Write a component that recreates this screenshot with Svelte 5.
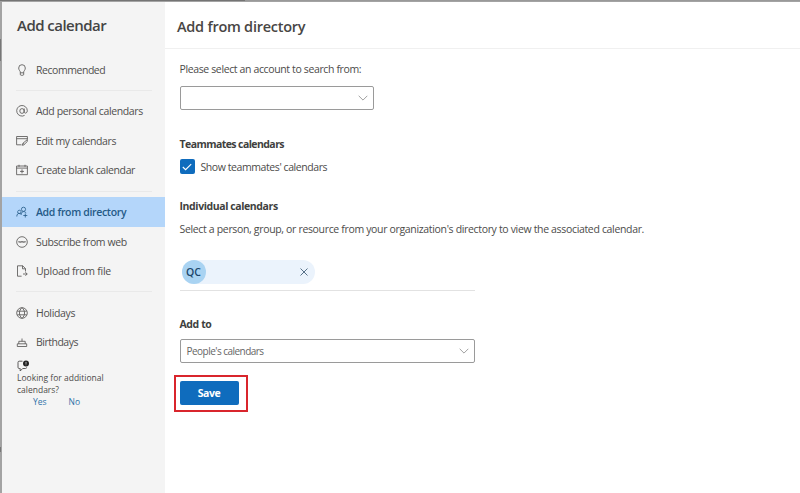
<script lang="ts">
    interface Item {
        icon: string;
        label: string;
        spacing: number;
        active?: boolean;
    }

    const groups: Item[][] = [
        [{ icon: 'bulb', label: 'Recommended', spacing: -0.45 }],
        [
            { icon: 'at', label: 'Add personal calendars', spacing: -0.38 },
            { icon: 'edit', label: 'Edit my calendars', spacing: -0.38 },
            { icon: 'create', label: 'Create blank calendar', spacing: -0.38 },
        ],
        [
            { icon: 'people', label: 'Add from directory', spacing: -0.33, active: true },
            { icon: 'web', label: 'Subscribe from web', spacing: -0.38 },
            { icon: 'file', label: 'Upload from file', spacing: -0.28 },
        ],
        [
            { icon: 'globe', label: 'Holidays', spacing: -0.35 },
            { icon: 'cake', label: 'Birthdays', spacing: -0.5 },
        ],
    ];

    // 12x12 outlines
    const icons: Record<string, string> = {
        bulb: 'M4.3 8.8V8C4.3 7 2.7 6.200 2.700 4A3.300 3.300 0 0 1 9.300 4C9.300 6.200 7.700 7 7.700 8V8.800ZM4.300 8.800V10.300Q4.300 11.300 5.300 11.300H6.700Q7.700 11.300 7.700 10.300V8.800',
        at: 'M8.200 3.500V6.800C8.200 8.900 11.300 8.500 11.300 5.700A5.300 5.300 0 1 0 8.600 10.400M8.200 6A2.200 2.400 0 1 1 3.800 6A2.200 2.400 0 1 1 8.200 6',
        edit: 'M5.500 9.800H.6V1.500H11.400V4.500M.6 3.700H11.400M6.300 10.300L7 8.200L11.300 4.600V6.500L7.800 9.900ZM7 8.200L8 9.500',
        create: 'M.6 2H11.400V10.700H.6ZM.6 4.100H11.400M3 .8V2.800M9 .8V2.800M6 5.300V9.400M4 7.400H8',
        people: 'M.8 10.500C.8 8.200 2 7.400 3.200 7.400S5 8 5.300 8.700M5 5.500A1.700 1.700 0 1 1 1.700 5.500A1.700 1.700 0 0 1 5 5.500M9.600 3.300A2.100 2.100 0 1 1 5.400 3.300A2.100 2.100 0 1 1 9.600 3.300M5.300 8.400C5.500 6.700 6.300 5.600 7.600 5.600S9.800 6.300 10 7.200M9.300 7.500V11.500M7.300 9.500H11.300',
        web: 'M11.300 6A5.300 5.300 0 1 1 .7 6A5.300 5.300 0 1 1 11.300 6M2.500 5.300L3.200 6.500L3.900 5.300L4.600 6.500L5.300 5.300L6 6.500L6.700 5.300L7.400 6.500L8.100 5.300L8.800 6.500L9.500 5.300',
        file: 'M5.600 11.200H1.500V.8H6.700L9.500 3.600V6.500M6.500 .8V3.800H9.500M7 9H11.200M9.400 7.200L11.200 9L9.400 10.800',
        globe: 'M11.300 6A5.300 5.300 0 1 1 .7 6A5.300 5.300 0 1 1 11.300 6M6 .7C2.600 3.500 2.600 8.500 6 11.300C9.400 8.500 9.400 3.500 6 .7M1.300 4.200H10.700M1.300 7.800H10.700',
        cake: 'M1.300 10.500V7.800H10.700V10.500ZM2.800 7.800V5.300H9.200V7.800M6 5.300V2.500',
    };

    let showTeammates = $state(true);
</script>

{#snippet chevron()}
    <svg class="chevron" viewBox="0 0 10 6"><path d="M.7.8L5 5.100L9.300.8" /></svg>
{/snippet}

<div class="screen">
    <div class="panel">
        <aside>
            <h2>Add calendar</h2>
            <nav>
                {#each groups as group}
                    <div class="group">
                        {#each group as item}
                            <button type="button" class="item" class:active={item.active}>
                                <svg class="icon" viewBox="0 0 12 12"><path d={icons[item.icon]} /></svg>
                                <span style="letter-spacing: {item.spacing}px">{item.label}</span>
                            </button>
                        {/each}
                    </div>
                {/each}
            </nav>
            <div class="survey">
                <svg viewBox="0 0 13 12">
                    <path d="M5.500 1.200H2.200Q1 1.200 1 2.400V7.300Q1 8.500 2.200 8.500H3.200V11L5.700 8.500H8.500Q9.600 8.500 9.600 7.400" />
                    <circle cx="9" cy="3.500" r="3" />
                    <path class="tick" d="M9 1.900V3.800M9 4.500V5.200" />
                </svg>
                <p>Looking for additional calendars?</p>
                <div class="answers"><a href="#yes">Yes</a><a href="#no">No</a></div>
            </div>
        </aside>
        <main>
            <header><h1>Add from directory</h1></header>
            <div class="body">
                <p class="prompt">Please select an account to search from:</p>
                <div class="select account">{@render chevron()}</div>

                <h3 class="teammates">Teammates calendars</h3>
                <label>
                    <input type="checkbox" bind:checked={showTeammates} />
                    <span class="box" class:checked={showTeammates}>
                        <svg viewBox="0 0 10 8"><path d="M.8 4L3.600 6.700L9.200 1.100" /></svg>
                    </span>
                    <span class="text">Show teammates' calendars</span>
                </label>

                <h3 class="individual">Individual calendars</h3>
                <p class="hint">Select a person, group, or resource from your organization's directory to view the associated calendar.</p>
                <div class="picker">
                    <div class="pill">
                        <span class="avatar">QC</span>
                        <svg viewBox="0 0 8 8"><path d="M.5.5L7.500 7.500M7.500.5L.5 7.500" /></svg>
                    </div>
                </div>

                <h3 class="addto">Add to</h3>
                <div class="select target"><span>People's calendars</span>{@render chevron()}</div>
                <div class="highlight"><button type="button" class="save">Save</button></div>
            </div>
        </main>
    </div>
</div>

<style>
    :global(body) { margin: 0; overflow: hidden; }
    /* the dimmed window behind shows as a thin edge on the top and left */
    .screen {
        box-sizing: border-box; width: 800px; height: 493px; padding: 2px 0 0 2px;
        background:
            linear-gradient(90deg, #747474 245px, #999 245px) top / 100% 1px no-repeat,
            linear-gradient(#777, #777) 0 39px / 1px 22px no-repeat,
            linear-gradient(#777, #777) 0 447px / 1px 5px no-repeat,
            #a3a3a3;
        font-family: "Open Sans", "Noto Sans", sans-serif; font-size: 10.5px; color: #4c4b4a;
    }
    .panel { display: flex; height: 491px; background: #fff; }
    h1, h2, h3, p { margin: 0; white-space: nowrap; }
    svg { fill: none; stroke: currentColor; flex: none; }
    button { font: inherit; border: none; padding: 0; cursor: pointer; }

    aside { width: 163px; flex: none; background: #f4f4f4; }
    h2 { height: 53px; padding-left: 15px; font-size: 15px; line-height: 46px; font-weight: 600; letter-spacing: -0.53px; color: #444; }
    .group { position: relative; }
    .group + .group { margin-top: 11.9px; }
    .group + .group::before {
        content: ""; position: absolute; top: -6.5px; left: 14px; right: 13px; height: 1px; background: #e9e9e9;
    }
    .item {
        display: flex; align-items: center; gap: 8px; width: 100%; height: 29.6px; padding-left: 14px;
        background: none; color: #504f4e; white-space: nowrap;
    }
    .item.active { background: #b4d6fa; color: #245a87; font-weight: 600; }
    .icon { width: 12px; height: 12px; stroke-width: 0.8; }
    .survey { padding: 3px 0 0 15px; font-size: 8.5px; line-height: 12px; }
    .survey > svg { display: block; width: 13px; height: 12px; stroke-width: 0.9; }
    .survey circle { fill: #222; stroke: none; }
    .survey .tick { stroke: #ddd; stroke-width: 0.8; }
    .survey p { width: 100px; white-space: normal; }
    .answers { display: flex; gap: 22px; padding-left: 16px; }
    a { color: #2f72a8; text-decoration: none; }

    main { flex: 1; min-width: 0; }
    header { height: 46px; padding-left: 12px; border-bottom: 1px solid #f0f0f0; }
    h1 { font-size: 14.5px; line-height: 50px; font-weight: 600; letter-spacing: -0.25px; color: #484644; }
    .body { padding: 13px 0 0 14.5px; }
    .prompt { line-height: 14px; letter-spacing: -0.37px; }
    .select {
        display: flex; align-items: center; justify-content: space-between; box-sizing: border-box; height: 24px;
        padding: 0 5px 0 6px; border: 1px solid #9a9a9a; border-radius: 2px; color: #666;
    }
    .select span { font-size: 10px; letter-spacing: -0.53px; }
    .chevron { width: 10px; height: 6px; margin-left: auto; color: #888; stroke-width: 0.8; }
    .account { width: 194px; margin-top: 10px; }
    h3 { font-size: 10.5px; line-height: 14px; font-weight: 700; letter-spacing: -0.4px; color: #403f3e; }
    .teammates { margin-top: 27px; letter-spacing: -0.57px; }
    label { display: flex; align-items: center; gap: 6px; height: 15px; margin-top: 8px; }
    .text { letter-spacing: -0.42px; }
    input { position: absolute; opacity: 0; }
    .box { display: flex; align-items: center; justify-content: center; width: 15px; height: 15px; border-radius: 2px; color: #fff; }
    .box.checked { background: #0f6cbd; }
    .box svg { width: 10px; height: 8px; stroke-width: 1.1; }
    .individual { margin-top: 25px; }
    .hint { margin-top: 9px; line-height: 14px; letter-spacing: -0.337px; }
    .picker { width: 295px; height: 30px; margin-top: 24px; border-bottom: 1px solid #e2e2e2; }
    .pill {
        display: flex; align-items: center; justify-content: space-between; box-sizing: border-box;
        width: 133px; height: 24px; margin-left: 2px; padding-right: 7px; border-radius: 12px; background: #ebf3fc;
    }
    .avatar { width: 24px; height: 24px; border-radius: 50%; background: #a9d3f2; color: #1b466a; line-height: 24px; text-align: center; font-weight: 600; }
    .pill svg { width: 8px; height: 8px; color: #46627b; stroke-width: 0.9; }
    .addto { margin-top: 26px; }
    .target { width: 295px; margin-top: 8px; }
    .highlight { box-sizing: border-box; width: 74px; height: 37px; margin: 12px 0 0 -6px; padding: 4px; border: 2px solid #d9252c; }
    .save { display: block; width: 59px; height: 24px; border-radius: 2px; background: #0f6cbd; color: #fff; font-weight: 700; letter-spacing: -0.4px; }
</style>
